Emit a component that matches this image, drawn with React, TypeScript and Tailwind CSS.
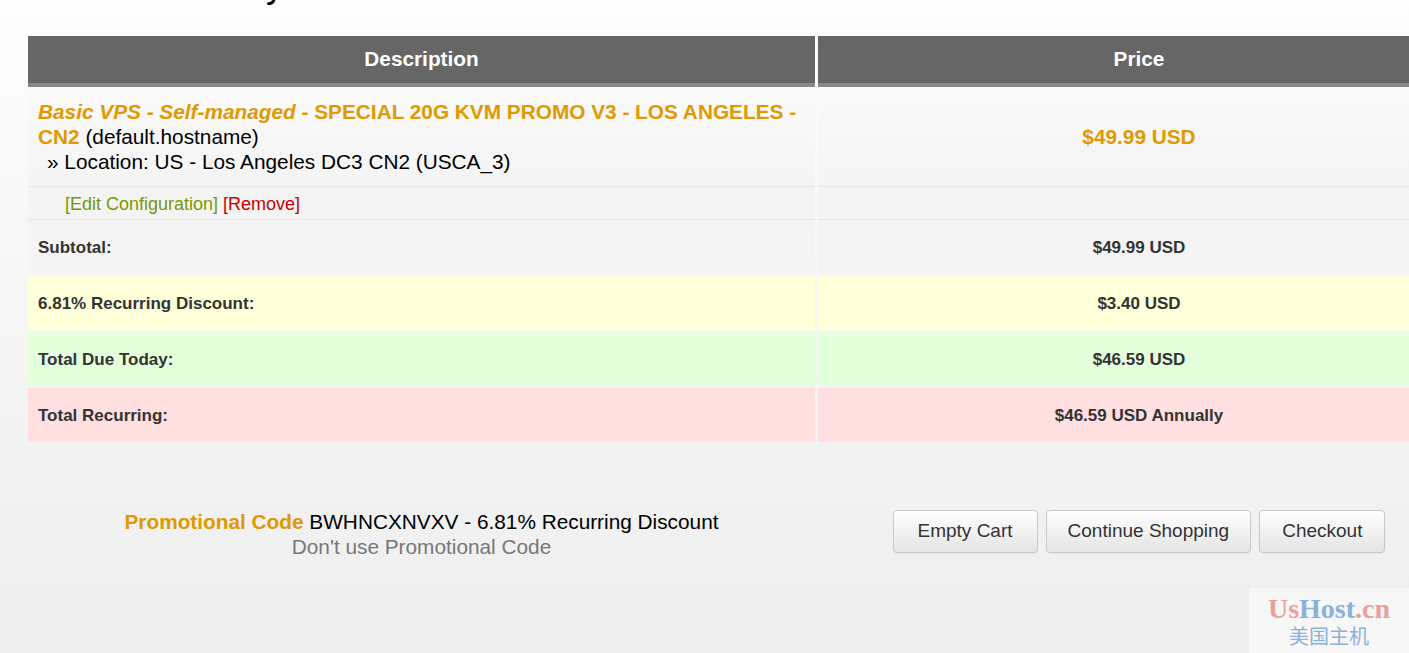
export default function App() {
  const summary = [
    { label: "Subtotal:", value: "$49.99 USD", bg: "bg-[#f4f4f4]" },
    { label: "6.81% Recurring Discount:", value: "$3.40 USD", bg: "bg-[#ffffd9]" },
    { label: "Total Due Today:", value: "$46.59 USD", bg: "bg-[#e4ffdc]" },
    { label: "Total Recurring:", value: "$46.59 USD Annually", bg: "bg-[#ffdfdf]" },
  ];
  const buttons = [
    { t: "Empty Cart", p: "px-[24px]" },
    { t: "Continue Shopping", p: "px-[21px]" },
    { t: "Checkout", p: "px-[22px]" },
  ];
  return (
    <div className="relative min-h-[653px] w-full overflow-hidden bg-gradient-to-b from-[#fdfdfd] to-[#eeeeee] font-['Liberation_Sans',Arial,sans-serif] text-black">
      <h1 className="-mt-[33px] ml-[28px] text-[36px] leading-[36px] font-normal text-black whitespace-nowrap">
        Order Summary
      </h1>

      <div className="mt-[33px] ml-[28px] w-[1432px]">
        {/* header */}
        <div className="grid grid-cols-[787px_642px] gap-x-[3px]">
          <div className="flex h-[51px] items-center justify-center border-b-4 border-[#888888] bg-[#666666] pb-[2px] text-[20.8px] font-bold text-white">
            Description
          </div>
          <div className="flex h-[51px] items-center justify-center border-b-4 border-[#888888] bg-[#666666] pb-[2px] text-[20.8px] font-bold text-white">
            Price
          </div>
        </div>

        {/* item row */}
        <div className="grid grid-cols-[787px_642px] gap-x-[3px]">
          <div className="h-[100px] border-b border-[#e6e6e6] bg-gradient-to-b from-[#fafafa] to-[#f4f4f4] py-[12px] pl-[10px] pr-2 text-[20.8px] leading-[25px]">
            <strong className="font-bold text-[#e09900]">
              <em>Basic VPS - Self-managed</em> - SPECIAL 20G KVM PROMO V3 - LOS ANGELES -
              <br />
              CN2
            </strong>{" "}
            (default.hostname)
            <br />
            <span className="pl-[9px]">» Location: US - Los Angeles DC3 CN2 (USCA_3)</span>
          </div>
          <div className="flex h-[100px] items-center justify-center border-b border-[#e6e6e6] bg-gradient-to-b from-[#fafafa] to-[#f4f4f4] text-[20.8px] font-bold text-[#e09900]">
            $49.99 USD
          </div>
        </div>

        {/* edit row */}
        <div className="grid grid-cols-[787px_642px] gap-x-[3px]">
          <div className="flex h-[33px] items-center border-b border-[#e6e6e6] bg-[#f4f4f4] pl-[37px] pt-[3px] text-[18px]">
            <span className="text-[#779900]">[Edit Configuration]</span>
            <span className="w-[5px]" />
            <span className="text-[#cc0000]">[Remove]</span>
          </div>
          <div className="h-[33px] border-b border-[#e6e6e6] bg-[#f4f4f4]" />
        </div>

        {/* summary rows */}
        <div className="flex flex-col gap-y-[2px]">
          {summary.map((r) => (
            <div key={r.label} className="grid grid-cols-[787px_642px] gap-x-[3px]">
              <div className={`flex h-[54px] items-center pl-[10px] pt-[2px] text-[17px] font-bold text-[#333333] ${r.bg}`}>
                {r.label}
              </div>
              <div className={`flex h-[54px] items-center justify-center pt-[2px] text-[17px] font-bold text-[#333333] ${r.bg}`}>
                {r.value}
              </div>
            </div>
          ))}
        </div>

        {/* bottom */}
        <div className="mt-[65px] grid grid-cols-[787px_642px] items-start gap-x-[3px]">
          <div className="mt-[2px] text-center text-[20.8px] leading-[25px]">
            <div>
              <strong className="font-bold text-[#e09900]">Promotional Code</strong> BWHNCXNVXV - 6.81% Recurring Discount
            </div>
            <div className="text-[#777777]">Don't use Promotional Code</div>
          </div>
          <div className="mt-[3px] flex justify-center gap-2">
            {buttons.map((b) => (
              <button
                key={b.t}
                className={`h-[43px] rounded-[4px] border border-[#c9c9c9] bg-gradient-to-b from-white to-[#e4e4e4] ${b.p} text-[19px] text-[#333333] shadow-[0_1px_1px_rgba(0,0,0,0.05)]`}
              >
                {b.t}
              </button>
            ))}
          </div>
        </div>
      </div>

      {/* watermark */}
      <div className="absolute bottom-0 right-0 flex h-[65px] w-[160px] flex-col items-center bg-[#f7f7f7] pt-[6px]">
        <div className="font-['Liberation_Serif',serif] text-[28px] font-bold leading-[30px]">
          <span className="text-[#e8a19c]">Us</span>
          <span className="text-[#8db1d9]">Host</span>
          <span className="text-[#e8a19c]">.cn</span>
        </div>
        <div className="font-['Noto_Sans_CJK_SC',sans-serif] text-[20px] leading-[24px] text-[#8db1d9]">美国主机</div>
      </div>
    </div>
  );
}
